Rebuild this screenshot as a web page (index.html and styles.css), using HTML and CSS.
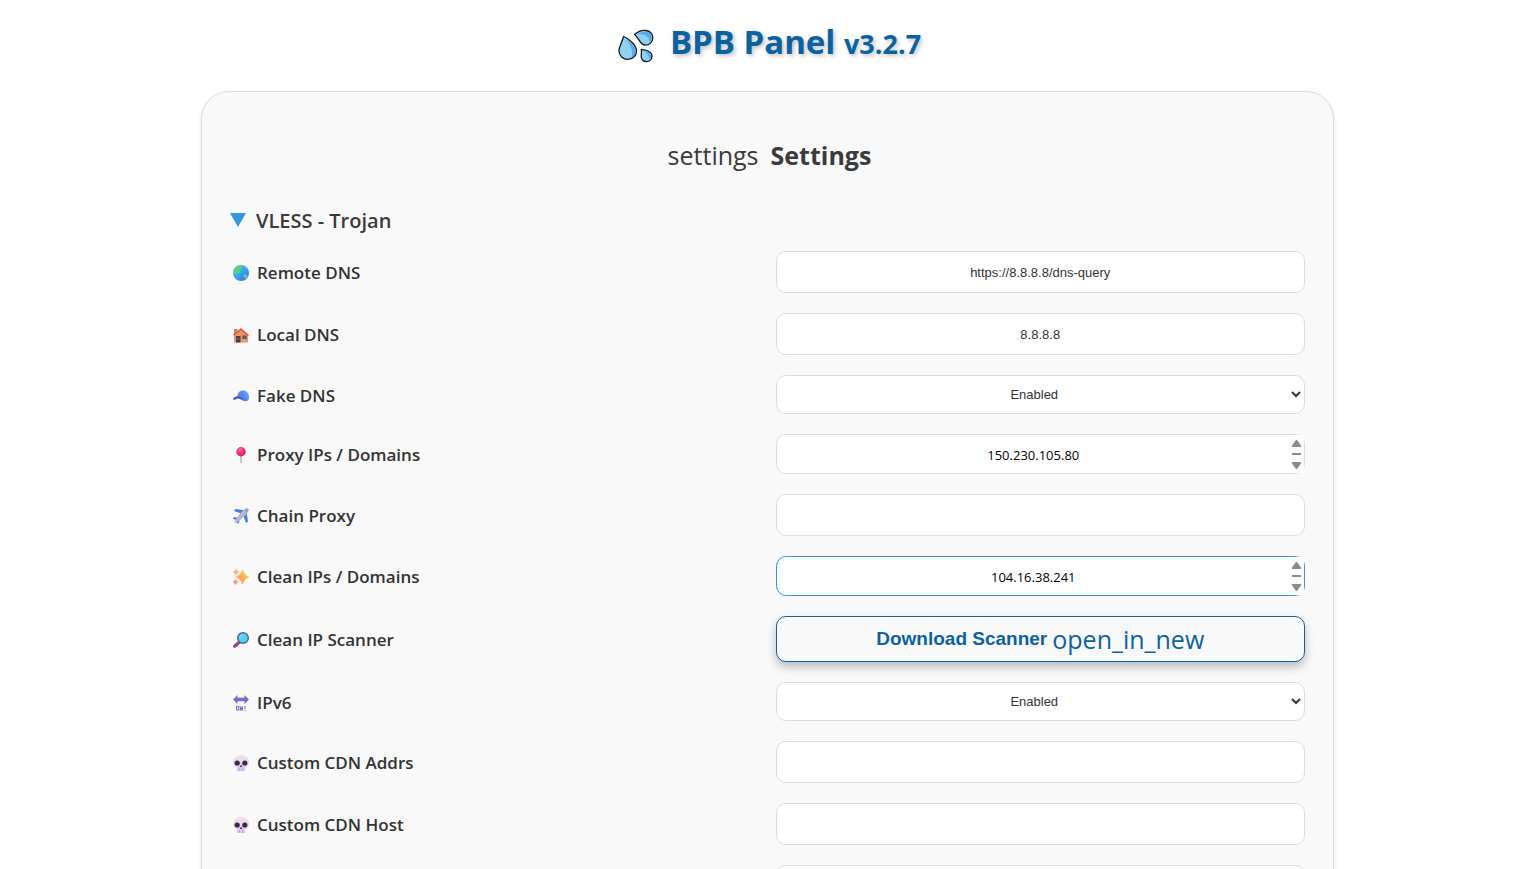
FILE: index.html
```html
<!DOCTYPE html>
<html lang="en">
<head>
<meta charset="utf-8">
<meta name="viewport" content="width=device-width, initial-scale=1">
<title>BPB Panel</title>
<link rel="stylesheet" href="styles.css">
</head>
<body>
<svg class="defs" width="0" height="0" aria-hidden="true">
  <defs>
    <linearGradient id="sea" x1="0" y1="0" x2="1" y2="1"><stop offset="0" stop-color="#35c6f4"/><stop offset=".5" stop-color="#33a4f5"/><stop offset="1" stop-color="#3a5fd9"/></linearGradient>
    <linearGradient id="blue" x1="1" y1="0" x2="0" y2="1"><stop offset="0" stop-color="#6cb0ff"/><stop offset="1" stop-color="#4a68e0"/></linearGradient>
    <linearGradient id="gold" x1="1" y1="0" x2="0" y2="1"><stop offset="0" stop-color="#ffd23c"/><stop offset="1" stop-color="#fa8a6c"/></linearGradient>
    <linearGradient id="bone" x1="0" y1="0" x2="0" y2="1"><stop offset="0" stop-color="#eee4ea"/><stop offset="1" stop-color="#dcc3f5"/></linearGradient>
    <radialGradient id="pin" cx=".4" cy=".3" r=".7"><stop offset="0" stop-color="#ff86a8"/><stop offset=".4" stop-color="#f8367a"/><stop offset="1" stop-color="#cc2460"/></radialGradient>
    <symbol id="skull" viewBox="0 0 16 16">
      <path fill="url(#bone)" d="M8 0C3.300 0 0 3 0 7c0 2.700 1.400 4.400 3.800 4.800V15q0 1 1 1h6.400q1 0 1-1v-3.200C14.600 11.400 16 9.700 16 7c0-4-3.300-7-8-7z"/>
      <circle cx="4.200" cy="8" r="2.600" fill="#3d2b3d"/><circle cx="11.800" cy="8" r="2.600" fill="#3d2b3d"/>
      <path d="M8 9.500L6.700 12h2.600z" fill="#4a3550"/><path d="M6.300 13v3M9.700 13v3" stroke="#b597d8" stroke-width=".8"/>
    </symbol>
    <symbol id="scroll" viewBox="0 0 15 38">
      <rect width="15" height="38" fill="#fcfcfc"/>
      <path d="M7.500 5q.8 0 1.300 1l3.300 4.700q.6 1.300-.6 1.300h-8q-1.200 0-.6-1.300L6.200 6q.5-1 1.300-1zM7.500 34q.8 0 1.300-1l3.300-4.700q.6-1.300-.6-1.300h-8q-1.200 0-.6 1.300L6.200 33q.5 1 1.300 1zM3 18h9v2H3z" fill="#8b8b8b"/>
    </symbol>
  </defs>
</svg>
<header class="header">
  <svg class="drops" viewBox="0 0 36 34" aria-hidden="true">
    <g stroke="#16181a" stroke-width="1.300" stroke-linejoin="round" fill="#8fd0f5">
      <path d="M5.500 7.500C10 9 18.500 16 18.500 22c0 5-4 8.300-8.700 8.300S1 26.700 1 22C1 17 4 14 5.500 7.500z"/>
      <path d="M16.500 5.500C20 2.500 24 1 28 1.500c4 .4 7 3.500 6.800 7.500-.2 4-3.300 7.200-7.300 7.200C21.500 16.200 21.500 9 16.500 5.500z"/>
      <path d="M23.300 20.500c3.500.6 10.700.8 10.700 6.500 0 3.500-2.400 5.700-5.500 5.700-3.400 0-5.500-2.600-5.300-5.700.1-2.500.6-4 .1-6.500z"/>
    </g>
    <g fill="#5aa9e6"><path d="M7.500 10c5 3 10 8 10 12.200 0 3-1.500 5.200-3.600 6.400C15 21 12 14.500 7.500 10zM19.500 5c5-3 14-4 14 4 0 2-.8 3.600-1.800 4.700C31.500 7.500 26 4.300 19.500 5zM25 21.800c3.500.4 8 1 8 5.200 0 1.700-.7 3-1.600 3.800C31 26.500 29 24 25 21.800z"/></g>
  </svg>
  <h1 class="title">BPB Panel <span class="version">v3.2.7</span></h1>
</header>
<main class="card">
  <h2 class="heading"><span class="glyph-name">settings</span> Settings</h2>
  <details class="group" open>
    <summary class="summary"><svg class="caret" viewBox="0 0 16 14" aria-hidden="true"><path d="M0 0h16L8 14z" fill="#3498db"/></svg>VLESS - Trojan</summary>
    <form class="rows">
      <div class="row">
        <label class="label" for="remote"><svg class="icon" viewBox="0 0 16 16" aria-hidden="true"><circle cx="8" cy="8" r="8" fill="url(#sea)"/><path d="M1 4.500C3 1 6 0 8.500.2L9.500 2 8 3l.6 2-2 1.500L7 8 4.500 8 2.500 9.500.2 8.500zM11 9l2.500.5 1.200 1.500-1.500 2.500-2-.5-.8-2zM11 1l3 2-1 1.500z" fill="#5ccf82"/></svg>Remote DNS</label>
        <input class="field" id="remote" type="text" value="https://8.8.8.8/dns-query">
      </div>
      <div class="row">
        <label class="label" for="local"><svg class="icon" viewBox="0 0 16 16" aria-hidden="true"><path d="M1 2h3.500v6H1z" fill="#c98d6d"/><path d="M1 7.500L8 2l7 6v7.500H1z" fill="#dc9a70"/><path d="M0 7.500L8 1l8 7-1 1-7-5.500L1 8.800z" fill="#ee5a40"/><path d="M3 9h4.500v6.500H3z" fill="#513649"/><path d="M9.500 8.500h4V12h-4z" fill="#5d4057"/><path d="M3 12h4.500M11.500 8.500V12" stroke="#a77a70" stroke-width=".7"/></svg>Local DNS</label>
        <input class="field" id="local" type="text" value="8.8.8.8">
      </div>
      <div class="row">
        <label class="label" for="fake"><svg class="icon" viewBox="0 0 16 16" aria-hidden="true"><path d="M4.500 9C4.500 4.500 7 2.500 10 2.500s6 2.500 6 7c0 1-.5 2.500-1.200 3.300C12 14 8 12.500 4.500 9z" fill="url(#blue)"/><path d="M5 8C2.500 8.700.2 9.500 0 11.200c1.500 1.300 2.500.2 4-.4 2-.7 4 .5 6.500 1.200C9 10 7 8.500 5 8z" fill="#4555b8"/><path d="M10 3c-1 3 0 7 2 10" fill="none" stroke="#5579e4" stroke-width=".7"/></svg>Fake DNS</label>
        <select class="field select" id="fake"><option>Enabled</option></select>
      </div>
      <div class="row">
        <label class="label" for="proxy"><svg class="icon" viewBox="0 0 16 16" aria-hidden="true"><path d="M8 8v7.500" stroke="#a5a0ad" stroke-width="1.200" stroke-linecap="round"/><circle cx="8" cy="4.800" r="4.700" fill="url(#pin)"/></svg>Proxy IPs / Domains</label>
        <div class="area-wrap"><textarea class="field area" id="proxy" rows="1">150.230.105.80</textarea><svg class="scroll" aria-hidden="true"><use href="#scroll"/></svg></div>
      </div>
      <div class="row">
        <label class="label" for="chain"><svg class="icon" viewBox="0 0 16 16" aria-hidden="true"><path d="M9.500 6L1 3l1.500-2 10 1.500zM10 6.500L13 15l2-1.500L13.500 3.500zM5 9.500L.5 9.200 0 10.700l3 1.300 1.500 3.500 1.500-.5.500-4z" fill="#3f7ee8"/><path d="M2 14.200C4 9 10 2 13.500.5c1.200-.5 2.300.3 1.800 1.800C14 6 7.500 12 2.700 14.500z" fill="#bcb3cf" stroke="#bcb3cf"/><path d="M12.500 1.500l2 2" stroke="#7585c7" stroke-width="1.200"/></svg>Chain Proxy</label>
        <input class="field" id="chain" type="text">
      </div>
      <div class="row">
        <label class="label" for="clean"><svg class="icon" viewBox="0 0 16 16" aria-hidden="true"><path d="M9.500 1q1.500 5.200 6.500 7-5 1.800-6.500 7-1.500-5.200-6.500-7 5-1.800 6.500-7zM3 0q.5 2.500 2.800 3Q3.500 3.500 3 6 2.500 3.500.2 3 2.500 2.500 3 0zM2.500 10q.5 2.500 2.500 3-2 .5-2.500 3Q2 13.500 0 13q2-.5 2.500-3z" fill="url(#gold)" stroke="url(#gold)" stroke-width=".6"/></svg>Clean IPs / Domains</label>
        <div class="area-wrap"><textarea class="field area area-active" id="clean" rows="1">104.16.38.241</textarea><svg class="scroll" aria-hidden="true"><use href="#scroll"/></svg></div>
      </div>
      <div class="row">
        <label class="label" for="scanner"><svg class="icon" viewBox="0 0 16 16" aria-hidden="true"><path d="M1.700 14.200L6.500 10" stroke="#854785" stroke-width="3.200" stroke-linecap="round"/><circle cx="10" cy="6" r="5.300" fill="#55d2ee" stroke="#4c6399" stroke-width="1.400"/><path d="M7 5.500q.8-2.300 3-2.500" fill="none" stroke="#8ce7f8"/></svg>Clean IP Scanner</label>
        <button class="button" id="scanner" type="button">Download Scanner <span class="glyph-name glyph-link">open_in_new</span></button>
      </div>
      <div class="row">
        <label class="label" for="ipv6"><svg class="icon" viewBox="0 0 16 16" aria-hidden="true"><path d="M0 4.500L4.500 0v2.700h7V0L16 4.500 11.500 9V6.300h-7V9z" fill="#8068c5"/><path d="M3.500 11.500h2.300V15H3.500zM7.500 15.500v-4l2 4v-4M12 11v3M12 15v1" fill="none" stroke="#8068c5" stroke-width="1.100"/></svg>IPv6</label>
        <select class="field select" id="ipv6"><option>Enabled</option></select>
      </div>
      <div class="row">
        <label class="label" for="addrs"><svg class="icon" aria-hidden="true"><use href="#skull"/></svg>Custom CDN Addrs</label>
        <input class="field" id="addrs" type="text">
      </div>
      <div class="row">
        <label class="label" for="host"><svg class="icon" aria-hidden="true"><use href="#skull"/></svg>Custom CDN Host</label>
        <input class="field" id="host" type="text">
      </div>
      <div class="row">
        <span></span>
        <input class="field" type="text" aria-label="Custom CDN SNI">
      </div>
    </form>
  </details>
</main>
</body>
</html>
```
FILE: styles.css
```css
* { box-sizing: border-box; }
body {
  margin: 0;
  height: 100vh;
  padding-right: 2px;
  overflow: hidden;
  background: #fff;
  color: #333;
  font-family: "Segoe UI", "Open Sans", "Noto Sans", sans-serif;
}
.defs { position: absolute; }
.header {
  display: flex;
  justify-content: center;
  align-items: center;
  gap: 16px;
  height: 91px;
  padding: 0 0 5px 4px;
}
.drops { width: 36px; height: 34px; margin-top: 6px; }
.title {
  margin: 0;
  color: #0a62a0;
  font-size: 33px;
  line-height: 44px;
  font-weight: 700;
  text-shadow: 2px 2px 4px rgba(0, 0, 0, .25);
}
.version { font-size: 27px; }
.card {
  width: 90%;
  max-width: 1133px;
  margin: 0 auto;
  padding: 28px;
  background: #f9f9f9;
  border: 1px solid #ddd;
  border-radius: 28px;
  box-shadow: 0 2px 4px rgba(0, 0, 0, .1);
}
.heading {
  display: flex;
  justify-content: center;
  align-items: center;
  gap: 12px;
  margin: 16px 0 32px;
  padding-left: 4px;
  color: #3b3b3b;
  font-size: 25px;
  line-height: 38px;
  font-weight: 700;
}
.glyph-name { font-size: 25px; font-weight: 400; }
.summary {
  display: flex;
  align-items: center;
  gap: 10px;
  margin-bottom: 16px;
  color: #3b3b3b;
  font-size: 20px;
  line-height: 29px;
  font-weight: 600;
  list-style: none;
  cursor: pointer;
}
.caret { width: 16px; height: 14px; margin-bottom: 2px; }
.rows { display: grid; gap: 20px; }
.row {
  display: grid;
  grid-template-columns: 1fr 1fr;
  column-gap: 16px;
  align-items: center;
}
.label {
  display: flex;
  align-items: center;
  gap: 8px;
  padding: 2px 0 0 3px;
  font-size: 17px;
  line-height: 24px;
  font-weight: 600;
}
.icon { width: 16px; height: 16px; }
.field {
  display: block;
  width: 100%;
  height: 42px;
  margin: 0;
  padding: 0 10px;
  background: #fff;
  border: 1px solid #ddd;
  border-radius: 10px;
  color: #333;
  font: 13px "Liberation Sans", Arial, sans-serif;
  text-align: center;
}
.select { height: 39px; padding: 0; text-align-last: center; }
.area-wrap { position: relative; }
.area {
  height: 40px;
  padding: 10px 24px 0 10px;
  overflow: hidden;
  resize: none;
  color: #000;
  font: 13px/20px "Segoe UI", "Open Sans", "Noto Sans", sans-serif;
}
.area-active { border-color: #3498db; }
.scroll { position: absolute; top: 1px; right: 1px; width: 15px; height: 38px; }
.button {
  display: flex;
  justify-content: center;
  align-items: center;
  gap: 5px;
  height: 46px;
  padding: 0 10px;
  background: #f9f9f9;
  border: 1px solid #0a62a0;
  border-radius: 10px;
  box-shadow: 0 5px 10px rgba(0, 0, 0, .25);
  color: #0a62a0;
  font: 700 19px "Liberation Sans", Arial, sans-serif;
  cursor: pointer;
}
.glyph-link { font-family: "Segoe UI", "Open Sans", "Noto Sans", sans-serif; }
```
